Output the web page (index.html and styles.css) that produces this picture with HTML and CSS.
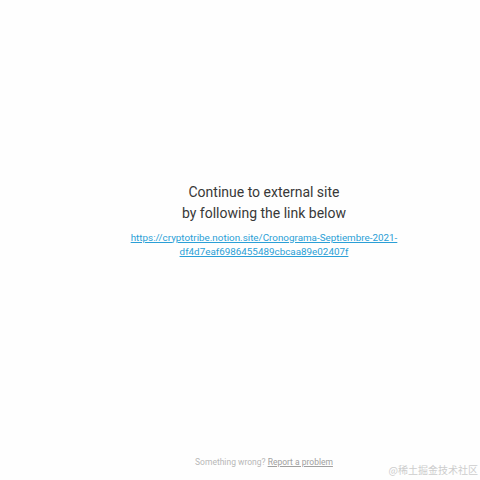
FILE: index.html
```html
<!DOCTYPE html>
<html>
<head>
<meta charset="utf-8">
<link rel="stylesheet" href="styles.css">
</head>
<body>
<div class="page">
  <main class="main">
    <div class="box">
      <h1 class="title">Continue to external site<br>by following the link below</h1>
      <a class="link" href="#">https://cryptotribe.notion.site/Cronograma-Septiembre-2021-<br>df4d7eaf6986455489cbcaa89e02407f</a>
    </div>
  </main>
  <footer class="footer">Something wrong? <a class="report" href="#">Report a problem</a></footer>
</div>
<div class="watermark">@稀土掘金技术社区</div>
</body>
</html>
```
FILE: styles.css
```css
html, body { margin: 0; padding: 0; }
body { background: #fefefe; font-family: Roboto, "Noto Sans", sans-serif; width: 480px; height: 480px; overflow: hidden; position: relative; }
.page { display: flex; flex-direction: column; height: 480px; padding-left: 48px; box-sizing: border-box; }
.main { flex: 1; display: flex; align-items: center; justify-content: center; padding-top: 2px; }
.box { text-align: center; }
.title { margin: 0 0 7px 0; font-size: 14px; line-height: 21px; font-weight: 400; color: #383838; }
.link { display: block; font-size: 9.85px; line-height: 14px; color: #2a9fd6; text-decoration: underline; }
.footer { text-align: center; font-size: 8.5px; line-height: 12px; color: #b8b8b8; padding-top: 18px; height: 42px; box-sizing: border-box; }
.report { color: #a0a0a0; text-decoration: underline; }
.watermark { position: absolute; right: 2px; bottom: 3px; font-family: "Noto Sans CJK SC", serif; font-size: 10px; line-height: 14px; color: #cdcdcd; }
```
